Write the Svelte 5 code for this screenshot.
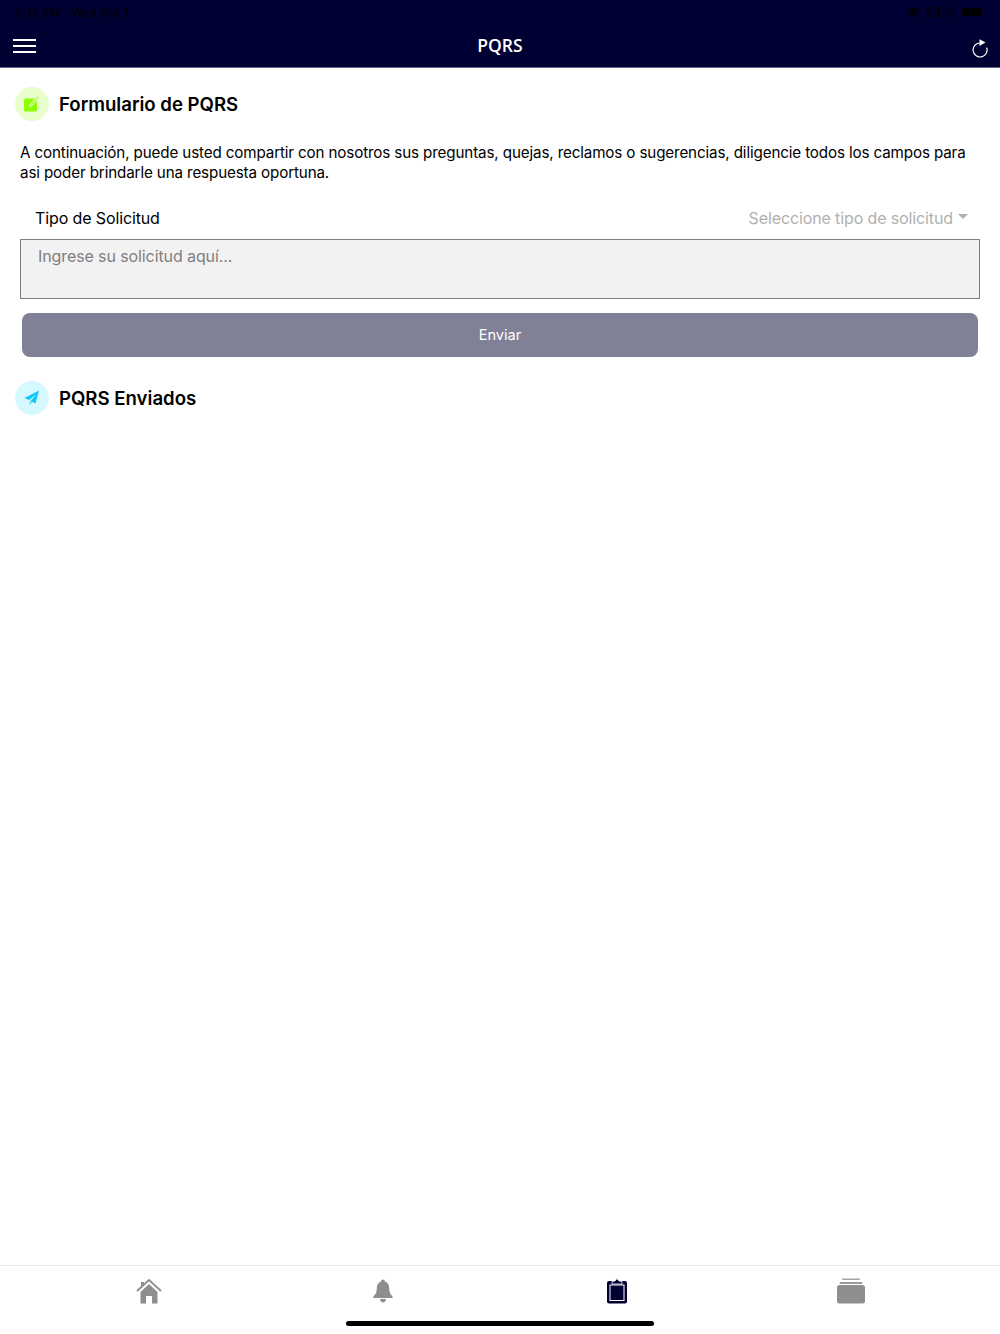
<script>
  const tabs = ['home', 'bell', 'clip', 'stack'];
</script>

<div class="page">
  <header class="top">
    <div class="status">
      <span>6:13 PM&nbsp;&nbsp;&nbsp;Wed Apr 1</span>
      <div class="status-right">
        <svg width="15" height="11" viewBox="0 0 16 12"><path d="M0.5 4 A11 11 0 0 1 15.5 4 L14 5.6 A9 9 0 0 0 2 5.6Z M3 6.6 A7.4 7.4 0 0 1 13 6.6 L11.5 8.2 A5 5 0 0 0 4.5 8.2Z M5.6 9.2 A3.4 3.4 0 0 1 10.4 9.2 L8 11.6Z" fill="#000"/></svg>
        <span class="pct">100%</span>
        <div class="battery"></div>
      </div>
    </div>
    <div class="nav">
      <div class="burger"><i></i><i></i><i></i></div>
      <div class="title">PQRS</div>
      <svg class="refresh" width="18" height="20" viewBox="0 0 18 20"><path d="M8.5 5 A7 7 0 1 0 15.8 10" fill="none" stroke="#fff" stroke-width="1.2" stroke-linecap="round"/><path d="M8.5 1.2 L14.5 4.6 L8.5 8Z" fill="#fff"/></svg>
    </div>
  </header>

  <main>
    <section class="heading">
      <div class="badge green">
        <svg width="18" height="18" viewBox="0 0 18 18"><rect x="1" y="3.5" width="13" height="13" rx="1.5" fill="#8cff00"/><path d="M6.5 11.5 L15.5 2" stroke="#eaffd0" stroke-width="2.6"/><path d="M6.5 11.5 L15.5 2" stroke="#8cff00" stroke-width="1"/></svg>
      </div>
      <h2>Formulario de PQRS</h2>
    </section>

    <p class="intro">A continuación, puede usted compartir con nosotros sus preguntas, quejas, reclamos o sugerencias, diligencie todos los campos para asi poder brindarle una respuesta oportuna.</p>

    <div class="select-row">
      <span class="label">Tipo de Solicitud</span>
      <span class="placeholder">Seleccione tipo de solicitud<i class="caret"></i></span>
    </div>

    <div class="textarea">Ingrese su solicitud aquí...</div>

    <button class="send">Enviar</button>

    <section class="heading second">
      <div class="badge blue">
        <svg width="18" height="18" viewBox="0 0 18 18"><path d="M16 1.5 L1.5 9 L6 11 L7 16 Z" fill="#12c8f8"/><path d="M6 11 L13.5 5 L8 12.2 L7 16Z" fill="#b4eefc"/><path d="M8 12.2 L12.5 14.5 L16 1.5 Z" fill="#12c8f8"/></svg>
      </div>
      <h2>PQRS Enviados</h2>
    </section>
  </main>

  <footer class="tabs">
    {#each tabs as t}
      <div class="tab">
        {#if t === 'home'}
          <svg width="26" height="26" viewBox="0 0 26 26"><path d="M1 13 L13 2 L25 13" fill="none" stroke="#8e8e8e" stroke-width="1.8"/><path d="M5 4 h3 v3 l-3 3Z" fill="#8e8e8e"/><path d="M4.5 14 L13 6 L21.5 14 V25.5 H16 V18 H10 V25.5 H4.5Z" fill="#8e8e8e"/></svg>
        {:else if t === 'bell'}
          <svg class="bell" width="20" height="24" viewBox="0 0 20 24"><path d="M10 0.5 C11.2 0.5 11.8 1.4 11.8 2.4 C15 3.2 16.2 6 16.2 9 C16.2 13.5 17.5 15.5 19.5 17.2 V19 H0.5 V17.2 C2.5 15.5 3.8 13.5 3.8 9 C3.8 6 5 3.2 8.2 2.4 C8.2 1.4 8.8 0.5 10 0.5Z" fill="#8e8e8e"/><path d="M7 20 H13 C12.8 22 11.5 23.5 10 23.5 C8.5 23.5 7.2 22 7 20Z" fill="#8e8e8e"/></svg>
        {:else if t === 'clip'}
          <svg width="22" height="26" viewBox="0 0 22 26"><rect x="1" y="3" width="20" height="22.5" rx="2" fill="#000033"/><path d="M6 6 V3.5 L9 3 L11 0.5 L13 3 L16 3.5 V6Z" fill="#000033" stroke="#fff" stroke-width="0.8"/><rect x="4" y="7" width="14" height="15.5" fill="#000033" stroke="#fff" stroke-width="1"/></svg>
        {:else}
          <svg width="28" height="26" viewBox="0 0 28 26"><rect x="5" y="0.5" width="18" height="1.6" rx="0.8" fill="#a4a4a4"/><rect x="2.5" y="4" width="23" height="2" rx="1" fill="#9a9a9a"/><rect x="0" y="7" width="28" height="18.5" rx="2.5" fill="#8e8e8e"/></svg>
        {/if}
      </div>
    {/each}
    <div class="home-bar"></div>
  </footer>
</div>

<style>
  :global(body) {
    margin: 0;
    background: #fff;
    font-family: Inter, "Liberation Sans", sans-serif;
    color: #000;
  }
  .page {
    height: 1334px;
    display: flex;
    flex-direction: column;
    overflow: hidden;
  }
  .top {
    height: 67px;
    background: #000033;
    border-bottom: 1px solid #66668a;
    flex: none;
  }
  .status {
    height: 24px;
    padding: 0 16px;
    display: flex;
    justify-content: space-between;
    align-items: center;
    font-size: 12px;
    color: #000;
  }
  .status-right {
    display: flex;
    align-items: center;
    gap: 4px;
    margin-right: 2px;
  }
  .pct { font-size: 12.5px; }
  .battery {
    width: 20px;
    height: 8px;
    background: #000;
    border-radius: 2px;
  }
  .nav {
    height: 43px;
    position: relative;
    display: flex;
    align-items: center;
    justify-content: space-between;
    padding: 0 11px 2px 13px;
  }
  .burger {
    width: 23px;
    display: flex;
    flex-direction: column;
    gap: 4px;
  }
  .burger i {
    display: block;
    height: 2px;
    background: #fff;
  }
  .title {
    position: absolute;
    left: 0;
    right: 0;
    text-align: center;
    font-family: "Open Sans", sans-serif;
    font-weight: 600;
    font-size: 17.5px;
    color: #fff;
    top: 9px;
  }
  .refresh { margin-top: 4px; }
  main {
    flex: 1;
    padding: 0 20px;
  }
  .heading {
    display: flex;
    align-items: center;
    gap: 10px;
    margin: 19px 0 0 -5px;
  }
  .heading.second { margin-top: 24px; }
  .badge {
    width: 34px;
    height: 34px;
    border-radius: 50%;
    display: flex;
    align-items: center;
    justify-content: center;
    flex: none;
  }
  .green { background: #e8ffcc; }
  .blue { background: #d6f8ff; }
  h2 {
    margin: 0;
    font-size: 18.6px;
    font-weight: 600;
    line-height: 34px;
  }
  .intro {
    margin: 22px 0 0;
    font-size: 15.2px;
    letter-spacing: -0.135px;
    line-height: 20px;
    color: #000;
  }
  .select-row {
    display: flex;
    justify-content: space-between;
    align-items: center;
    padding: 0 12px 0 15px;
    height: 24px;
    margin-top: 23px;
    font-size: 16px;
    letter-spacing: -0.12px;
  }
  .placeholder {
    color: #b0b0b0;
    display: flex;
    align-items: center;
  }
  .caret {
    width: 0;
    height: 0;
    border: 5px solid transparent;
    border-top: 5px solid #b0b0b0;
    border-bottom: 0;
    margin: -4px 0 0 5px;
  }
  .textarea {
    margin-top: 9px;
    height: 60px;
    box-sizing: border-box;
    border: 1px solid #808080;
    background: #f2f2f2;
    padding: 6px 17px;
    color: #808080;
    font-size: 16px;
    letter-spacing: -0.1px;
    line-height: 20px;
  }
  .send {
    display: block;
    width: 956px;
    height: 44px;
    margin: 14px 0 0 2px;
    background: #808096;
    color: #fff;
    border: 0;
    border-radius: 8px;
    font: inherit;
    font-size: 14.6px;
  }
  .tabs {
    flex: none;
    height: 68px;
    border-top: 1px solid #ebebeb;
    display: grid;
    grid-template-columns: repeat(4, 234px);
    justify-content: center;
    position: relative;
  }
  .tab {
    display: flex;
    justify-content: center;
    align-items: flex-start;
    padding-top: 12px;
  }
  .bell { margin-top: 1px; }
  .home-bar {
    position: absolute;
    left: 346px;
    bottom: 8px;
    width: 308px;
    height: 5px;
    border-radius: 3px;
    background: #000;
  }
</style>
